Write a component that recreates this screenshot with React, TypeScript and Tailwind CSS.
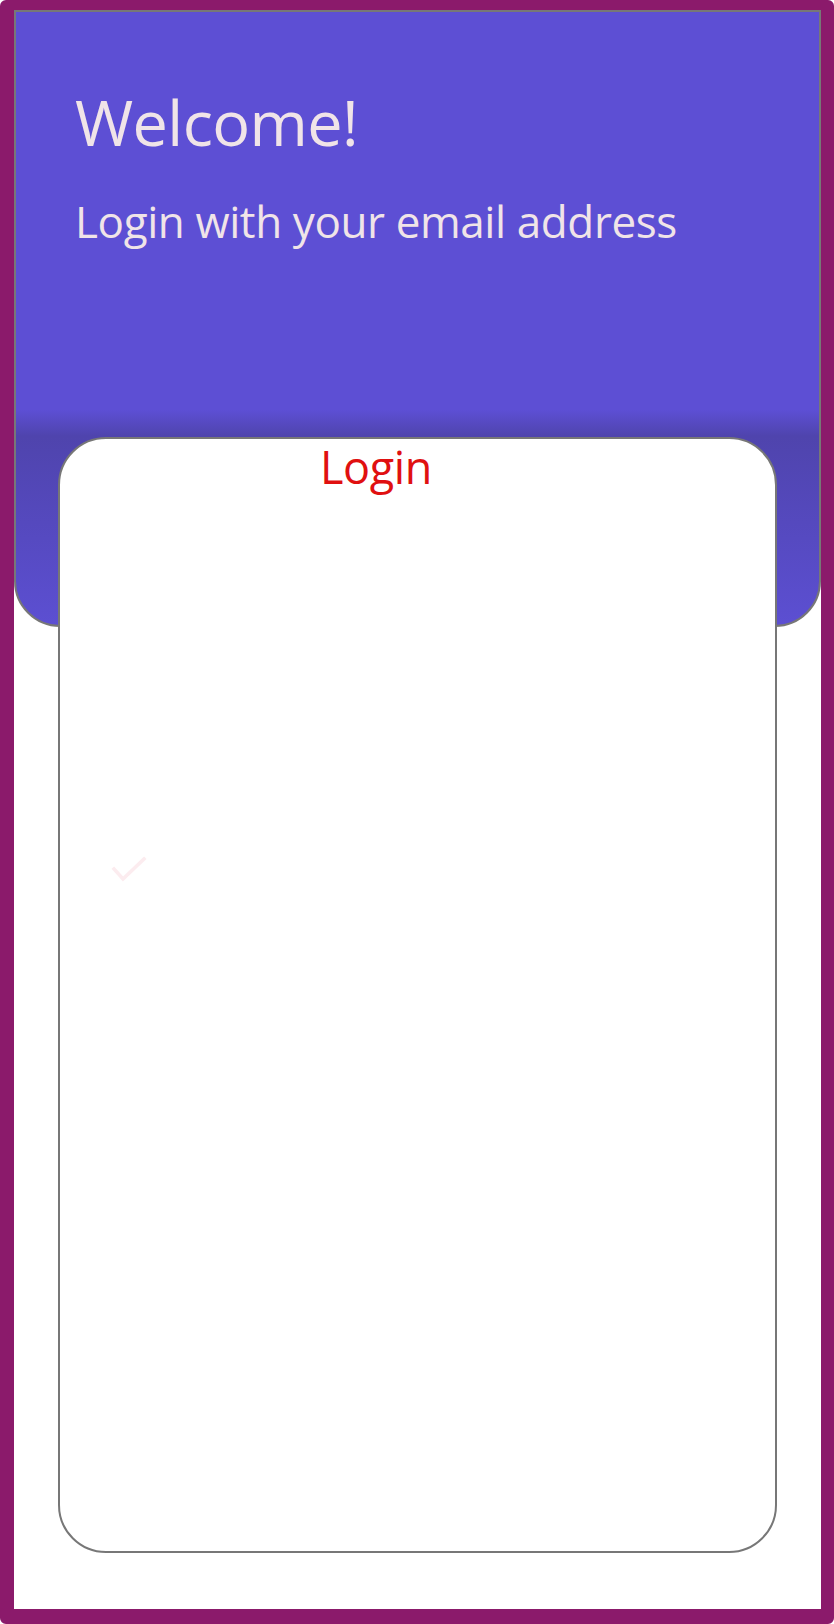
export default function App() {
  return (
    <main className="w-[834px] h-[1624px] bg-white border-[#8b1a6b] border-l-[14px] border-t-[10px] border-r-[13px] border-b-[15px] rounded-[6px] overflow-hidden font-['Open_Sans','Noto_Sans',sans-serif]">
      <header className="h-[617px] border-2 border-[#777777] rounded-b-[46px] bg-[linear-gradient(to_bottom,#5d4fd4_0px,#5d4fd4_398px,#4f44ad_424px,#5c4fd2_100%)] pl-[59px] pt-[70px] text-[#f0e4e8]">
        <h1 className="text-[63px] leading-[80px] font-normal tracking-[-0.6px]">Welcome!</h1>
        <h2 className="text-[44px] leading-[56px] mt-[31px] font-normal tracking-[-0.4px]">Login with your email address</h2>
      </header>

      <section className="relative z-10 -mt-[190px] ml-[44px] mr-[44px] h-[1116px] bg-white border-2 border-[#777777] rounded-[48px]">
        <p className="pl-[260px] text-[45px] leading-[56px] text-[#e01010] font-normal tracking-[-0.4px]">Login</p>

        <svg className="ml-[51px] mt-[360px]" width="36" height="30" viewBox="0 0 36 30" fill="none">
          <path d="M3 14 L12 24 L33 4" stroke="#fcecef" strokeWidth="3.5" strokeLinecap="square" />
        </svg>
      </section>
    </main>
  )
}
